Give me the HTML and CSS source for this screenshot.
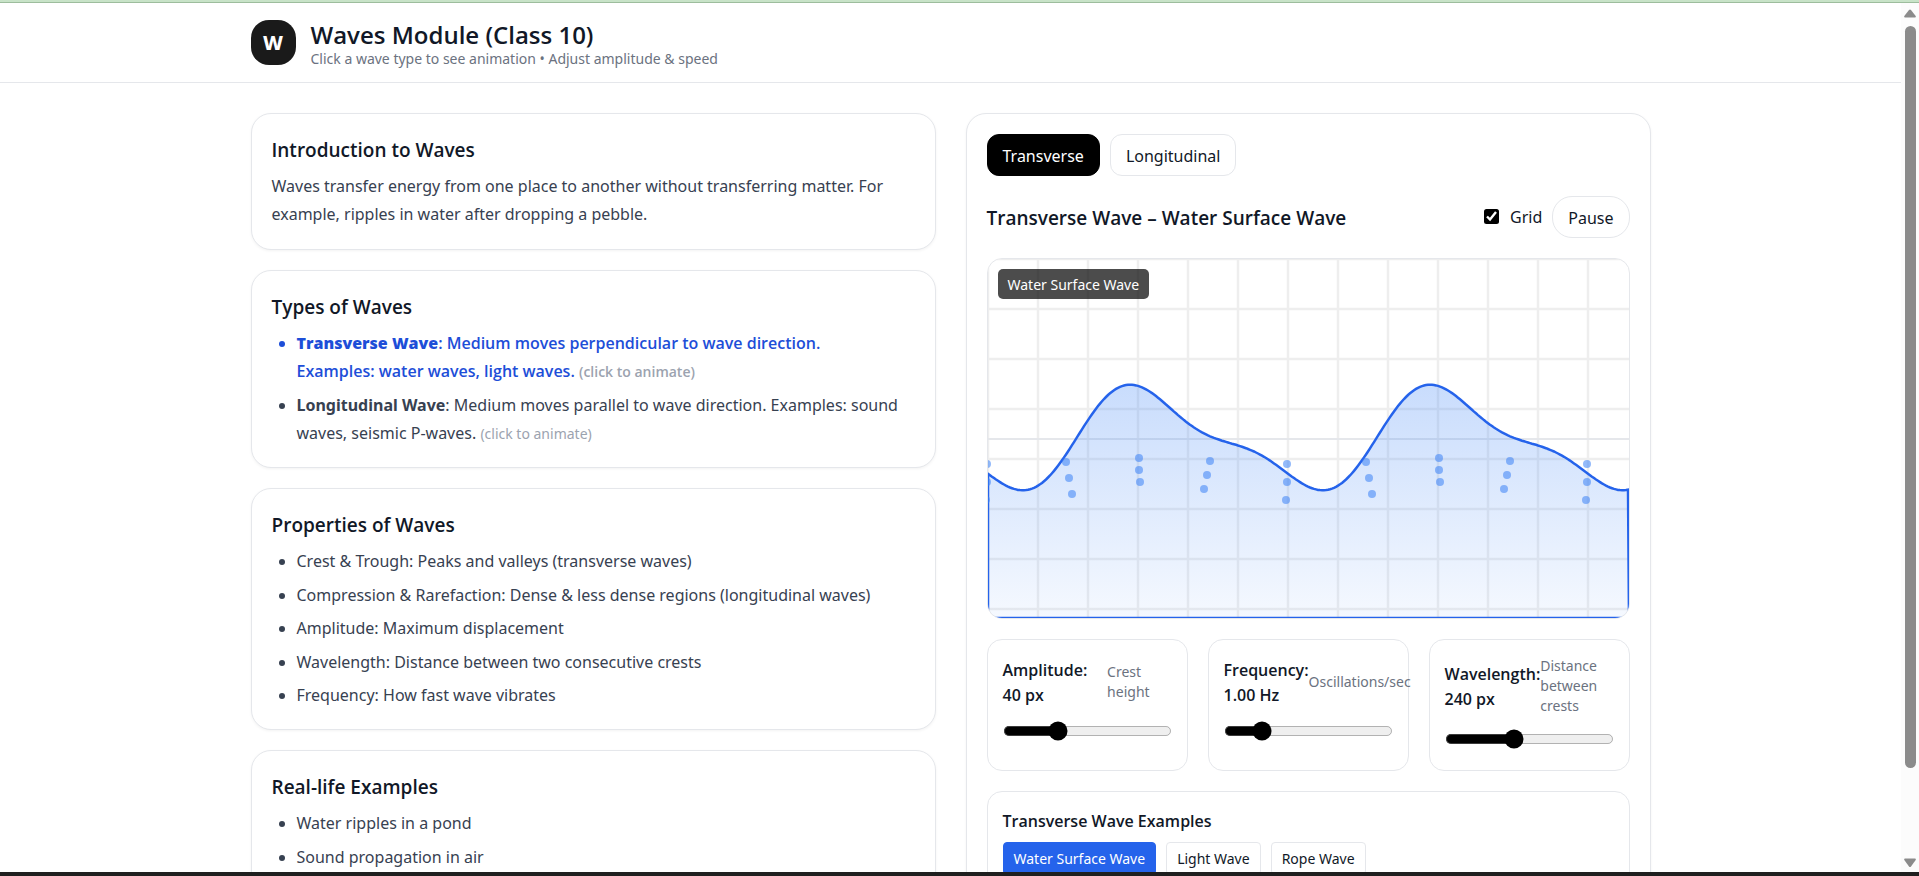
FILE: index.html
```html
<!DOCTYPE html>
<html lang="en">
<head>
<meta charset="utf-8">
<title>Waves Module (Class 10)</title>
<link rel="stylesheet" href="styles.css">
</head>
<body>
<div class="strip-top"></div>
<div class="frame">
  <div class="page">
    <header class="header">
      <div class="container brand">
        <div class="logo">W</div>
        <div>
          <h1 class="title">Waves Module (Class 10)</h1>
          <p class="subtitle">Click a wave type to see animation • Adjust amplitude &amp; speed</p>
        </div>
      </div>
    </header>
    <main class="container columns">
      <div class="notes">
        <section class="card">
          <h2 class="heading">Introduction to Waves</h2>
          <p class="prose">Waves transfer energy from one place to another without transferring matter. For example, ripples in water after dropping a pebble.</p>
        </section>
        <section class="card">
          <h2 class="heading">Types of Waves</h2>
          <ul class="list prose">
            <li class="selected"><strong>Transverse Wave</strong>: Medium moves perpendicular to wave direction. Examples: water waves, light waves. <span class="hint">(click to animate)</span></li>
            <li><strong>Longitudinal Wave</strong>: Medium moves parallel to wave direction. Examples: sound waves, seismic P-waves. <span class="hint">(click to animate)</span></li>
          </ul>
        </section>
        <section class="card">
          <h2 class="heading">Properties of Waves</h2>
          <ul class="list prose">
            <li>Crest &amp; Trough: Peaks and valleys (transverse waves)</li>
            <li>Compression &amp; Rarefaction: Dense &amp; less dense regions (longitudinal waves)</li>
            <li>Amplitude: Maximum displacement</li>
            <li>Wavelength: Distance between two consecutive crests</li>
            <li>Frequency: How fast wave vibrates</li>
          </ul>
        </section>
        <section class="card">
          <h2 class="heading">Real-life Examples</h2>
          <ul class="list prose">
            <li>Water ripples in a pond</li>
            <li>Sound propagation in air</li>
          </ul>
        </section>
      </div>
      <section class="card lab">
        <div class="row">
          <button class="btn btn-active" type="button">Transverse</button>
          <button class="btn" type="button">Longitudinal</button>
        </div>
        <div class="row bar">
          <h2 class="heading">Transverse Wave – Water Surface Wave</h2>
          <div class="row">
            <label class="check" for="grid"><input id="grid" type="checkbox" checked>Grid</label>
            <button class="btn btn-round" type="button">Pause</button>
          </div>
        </div>
        <div class="stage">
          <svg id="scene" class="scene" role="img" aria-label="Water Surface Wave"></svg>
          <span class="tag">Water Surface Wave</span>
        </div>
        <div class="controls">
          <div class="panel">
            <div class="caption"><label for="amp">Amplitude: 40 px</label><span class="note">Crest height</span></div>
            <input class="slider" id="amp" type="range" min="0" max="120" value="37">
          </div>
          <div class="panel">
            <div class="caption"><label for="freq">Frequency: 1.00 Hz</label><span class="note">Oscillations/sec</span></div>
            <input class="slider" id="freq" type="range" min="0" max="100" value="19">
          </div>
          <div class="panel">
            <div class="caption"><label for="len">Wavelength: 240 px</label><span class="note">Distance between crests</span></div>
            <input class="slider" id="len" type="range" min="0" max="100" value="40">
          </div>
        </div>
        <div class="panel">
          <h3 class="subheading">Transverse Wave Examples</h3>
          <div class="row">
            <button class="chip chip-active" type="button">Water Surface Wave</button>
            <button class="chip" type="button">Light Wave</button>
            <button class="chip" type="button">Rope Wave</button>
          </div>
        </div>
      </section>
    </main>
  </div>
  <div class="scrollbar">
    <svg width="12" height="9" viewBox="0 0 12 9"><path d="M6 0.5 Q6.6 0.5 7 1 L11.7 7 Q12.2 8.6 11 8.6 H1 Q-0.2 8.6 0.3 7 L5 1 Q5.4 0.5 6 0.5Z" fill="#8b8b8b"/></svg>
    <div class="track"><div class="thumb"></div></div>
    <svg width="12" height="9" viewBox="0 0 12 9"><path d="M6 9 Q5.4 9 5 8.5 L0.3 2 Q-0.2 0.4 1 0.4 H11 Q12.2 0.4 11.7 2 L7 8.5 Q6.6 9 6 9Z" fill="#8b8b8b"/></svg>
  </div>
</div>
<div class="strip-bottom"></div>
<script src="wave.js"></script>
</body>
</html>
```
FILE: styles.css
```css
* { box-sizing: border-box; }
body {
  margin: 0;
  height: 100vh;
  display: flex;
  flex-direction: column;
  background: #fff;
  color: #111827;
  font: 16px/25px "Noto Sans", "Open Sans", sans-serif;
}
h1, h2, h3, p, ul { margin: 0; padding: 0; }
button, input { font: inherit; color: inherit; margin: 0; }
.strip-top { flex: none; height: 3px; background: #c8e3c8; border-bottom: 1px solid #9dbd9d; }
.strip-bottom { flex: none; height: 4px; background: #1f1f1f; }
.frame { flex: 1; min-height: 0; display: flex; }
.page { flex: 1; overflow-y: auto; scrollbar-width: none; }
.container { max-width: 1440px; margin: 0 auto; padding: 0 20px; }
.header { border-bottom: 1px solid #e5e7eb; padding: 15px 0; }
.brand { display: flex; align-items: center; gap: 15px; }
.logo {
  width: 45px; height: 45px;
  border-radius: 18px;
  background: #1a1a1a;
  color: #fff;
  font-size: 20px; font-weight: 800; line-height: 45px;
  text-align: center;
}
.title { font-family: "Open Sans", sans-serif; font-size: 24px; line-height: 33px; font-weight: 600; }
.subtitle { font-size: 14px; line-height: 16px; color: #6b7280; }
.columns { display: grid; grid-template-columns: 1fr 1fr; gap: 30px; padding-top: 30px; padding-bottom: 30px; align-items: start; }
.notes { display: grid; gap: 20px; }
.card {
  border: 1px solid #e5e7eb;
  border-radius: 20px;
  padding: 20px;
  background: #fff;
  box-shadow: 0 1px 3px rgba(0, 0, 0, 0.05);
}
.heading { font-family: "Open Sans", sans-serif; font-size: 19px; line-height: 32px; font-weight: 600; }
.notes .heading { margin-bottom: 6px; }
.prose { line-height: 1.775; color: #374151; }
.list { display: grid; gap: 5px; padding-left: 25px; }
.selected { padding-right: 20px; font-family: "Open Sans", sans-serif; color: #1d4ed8; font-weight: 600; }
.selected strong { font-weight: 800; }
.hint { font-size: 14px; color: #9ca3af; }
.lab { display: grid; gap: 20px; grid-template-columns: minmax(0, 1fr); }
.row { display: flex; align-items: center; gap: 10px; }
.bar { justify-content: space-between; }
.bar .heading { padding-top: 2px; }
.btn {
  height: 42px;
  padding: 2px 15px 0;
  border: 1px solid #e5e7eb;
  border-radius: 12px;
  background: #fff;
}
.btn-active { background: #000; border-color: #000; color: #fff; }
.btn-round { border-radius: 20px; }
.check { display: flex; align-items: center; gap: 10px; }
.check input { zoom: 1.25; accent-color: #000; }
.stage { position: relative; height: 361px; border: 1px solid #e5e7eb; border-radius: 15px; overflow: hidden; }
.scene { display: block; width: 100%; height: 100%; }
.tag {
  position: absolute; left: 10px; top: 10px;
  padding: 1px 10px 0;
  border-radius: 5px;
  background: rgba(0, 0, 0, 0.7);
  color: #fff;
  font-size: 14px; line-height: 29px;
}
.controls { display: grid; grid-template-columns: repeat(3, minmax(0, 1fr)); gap: 20px; }
.panel { border: 1px solid #e5e7eb; border-radius: 15px; padding: 16px 15px 15px; }
.caption { display: flex; justify-content: space-between; align-items: center; font-family: "Open Sans", sans-serif; font-weight: 600; }
.caption label { padding-top: 2px; }
.note { font-family: "Noto Sans", sans-serif; font-size: 14px; line-height: 20px; font-weight: 400; color: #6b7280; }
.slider { display: block; width: 100%; height: 16px; margin: 10px 0 6px; zoom: 1.25; accent-color: #000; }
.controls .panel { padding-bottom: 14px; }
.subheading { font-family: "Open Sans", sans-serif; font-size: 16px; line-height: 26px; font-weight: 600; margin-bottom: 8px; }
.chip {
  height: 33px;
  padding: 0 10px;
  border: 1px solid #e5e7eb;
  border-radius: 4px;
  background: #fff;
  font-size: 14px;
}
.chip-active { background: #2563eb; border-color: #2563eb; color: #fff; }
.scrollbar { flex: none; width: 18px; padding: 6px 0 5px; display: flex; flex-direction: column; align-items: center; gap: 8px; background: #fcfcfc; }
.track { flex: 1; width: 11px; }
.thumb { height: 90%; border-radius: 6px; background: #8b8b8b; }
```
FILE: wave.js
```
const scene = document.getElementById('scene');
const W = scene.clientWidth;
const H = scene.clientHeight;
const MID = 180;
const PERIOD = 300;

// Surface height: fundamental plus second harmonic.
function surface(x) {
  const t = (2 * Math.PI * x) / PERIOD;
  return MID + 43.9 * Math.cos(t) + 10.7 * Math.sin(t)
    - 9.2 * Math.cos(2 * t) + 12.5 * Math.sin(2 * t);
}

let grid = '';
for (let x = 0; x <= W; x += 50) grid += `M${x} 0V${H}`;
for (let y = 0; y <= H; y += 50) grid += `M0 ${y}H${W}`;

let water = `M0 ${H}`;
for (let x = 0; x <= W; x += 2) water += `L${x} ${surface(x).toFixed(1)}`;
water += `L${W} ${H}Z`;

const particles = [
  [-1, 205], [-1, 223], [-2, 241],
  [78, 203], [81, 219], [84, 235],
  [151, 199], [151, 211], [152, 223],
  [222, 202], [219, 216], [216, 230],
];
let dots = '';
for (let shift = 0; shift <= W; shift += PERIOD) {
  for (const [x, y] of particles) {
    if (x + shift < W) dots += `<circle cx="${x + shift}" cy="${y}" r="4"/>`;
  }
}

scene.innerHTML = `
  <defs><linearGradient id="depth" gradientUnits="userSpaceOnUse" x1="0" y1="0" x2="0" y2="${H}">
    <stop offset="0" stop-color="#3b82f6" stop-opacity="0.4"/>
    <stop offset="1" stop-color="#3b82f6" stop-opacity="0.05"/>
  </linearGradient></defs>
  <path d="${grid}" stroke="#eeeeee" stroke-width="2.5"/>
  <path d="M0 ${MID}H${W}" stroke="#e5e7eb" stroke-width="2"/>
  <path d="${water}" fill="url(#depth)" stroke="#2563eb" stroke-width="2.5"/>
  <g fill="#3b82f6" fill-opacity="0.55">${dots}</g>`;
```
